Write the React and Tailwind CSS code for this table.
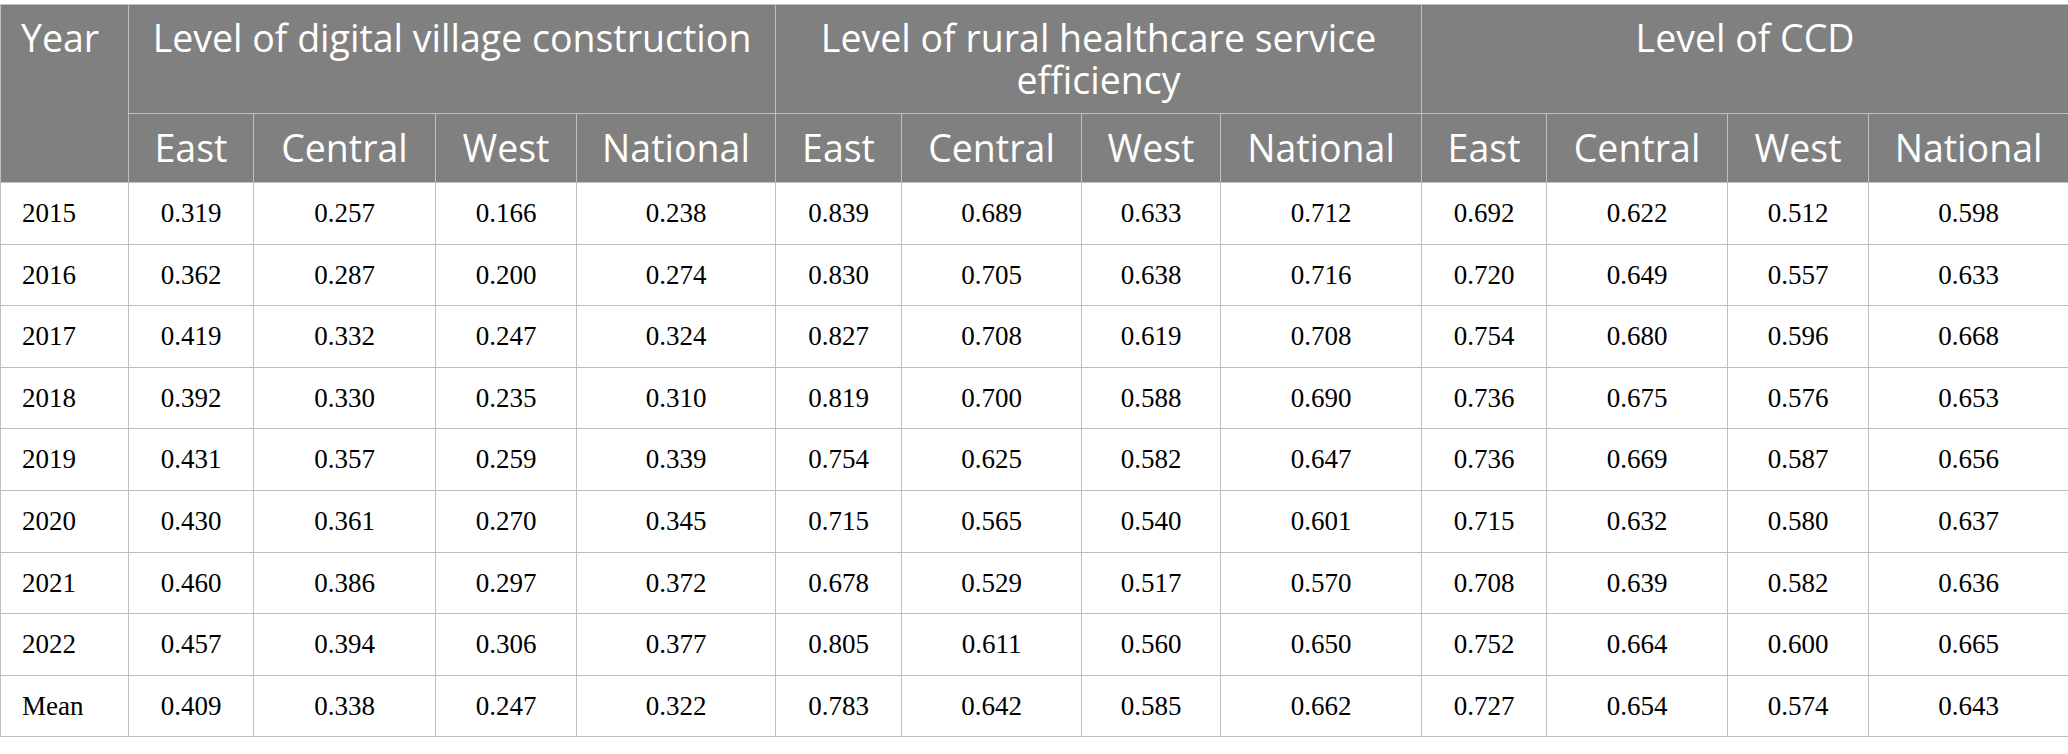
const rows = [
  ['2015', '0.319', '0.257', '0.166', '0.238', '0.839', '0.689', '0.633', '0.712', '0.692', '0.622', '0.512', '0.598'],
  ['2016', '0.362', '0.287', '0.200', '0.274', '0.830', '0.705', '0.638', '0.716', '0.720', '0.649', '0.557', '0.633'],
  ['2017', '0.419', '0.332', '0.247', '0.324', '0.827', '0.708', '0.619', '0.708', '0.754', '0.680', '0.596', '0.668'],
  ['2018', '0.392', '0.330', '0.235', '0.310', '0.819', '0.700', '0.588', '0.690', '0.736', '0.675', '0.576', '0.653'],
  ['2019', '0.431', '0.357', '0.259', '0.339', '0.754', '0.625', '0.582', '0.647', '0.736', '0.669', '0.587', '0.656'],
  ['2020', '0.430', '0.361', '0.270', '0.345', '0.715', '0.565', '0.540', '0.601', '0.715', '0.632', '0.580', '0.637'],
  ['2021', '0.460', '0.386', '0.297', '0.372', '0.678', '0.529', '0.517', '0.570', '0.708', '0.639', '0.582', '0.636'],
  ['2022', '0.457', '0.394', '0.306', '0.377', '0.805', '0.611', '0.560', '0.650', '0.752', '0.664', '0.600', '0.665'],
  ['Mean', '0.409', '0.338', '0.247', '0.322', '0.783', '0.642', '0.585', '0.662', '0.727', '0.654', '0.574', '0.643'],
]

const widths = ['w-[128px]', 'w-[125px]', 'w-[182px]', 'w-[141px]', 'w-[199px]', 'w-[126px]', 'w-[180px]', 'w-[139px]', 'w-[201px]', 'w-[125px]', 'w-[181px]', 'w-[141px]', 'w-[200px]']

const regions = ['East', 'Central', 'West', 'National']

export default function App() {
  return (
    <div className="bg-white pt-1 w-[2068px]">
      <table className="w-[2068px] table-fixed border-collapse">
        <colgroup>
          {widths.map((w, i) => (
            <col key={i} className={w} />
          ))}
        </colgroup>
        <thead className="bg-[#808080] text-white font-['Open_Sans',sans-serif] text-[37.5px] leading-[42px] font-normal">
          <tr>
            <th rowSpan={2} className="border border-[#bfbfbf] align-top text-left font-normal pl-[20px] pt-[12px]">
              Year
            </th>
            <th colSpan={4} className="border border-[#bfbfbf] align-top font-normal pt-[12px] pb-[12px]">
              Level of digital village construction
            </th>
            <th colSpan={4} className="border border-[#bfbfbf] align-top font-normal pt-[12px] pb-[12px]">
              Level of rural healthcare service<br />efficiency
            </th>
            <th colSpan={4} className="border border-[#bfbfbf] align-top font-normal pt-[12px] pb-[12px]">
              Level of CCD
            </th>
          </tr>
          <tr className="h-[69px]">
            {[0, 1, 2].map((g) =>
              regions.map((r) => (
                <th key={g + r} className="border border-[#bfbfbf] align-middle font-normal">
                  {r}
                </th>
              ))
            )}
          </tr>
        </thead>
        <tbody className="font-['Liberation_Serif','Times_New_Roman',serif] text-[27px] text-black">
          {rows.map((row) => (
            <tr key={row[0]} className="h-[61.6px]">
              {row.map((cell, i) => (
                <td
                  key={i}
                  className={
                    i === 0
                      ? 'border border-[#bfbfbf] text-left pl-[21px] align-middle'
                      : 'border border-[#bfbfbf] text-center align-middle'
                  }
                >
                  {cell}
                </td>
              ))}
            </tr>
          ))}
        </tbody>
      </table>
    </div>
  )
}
